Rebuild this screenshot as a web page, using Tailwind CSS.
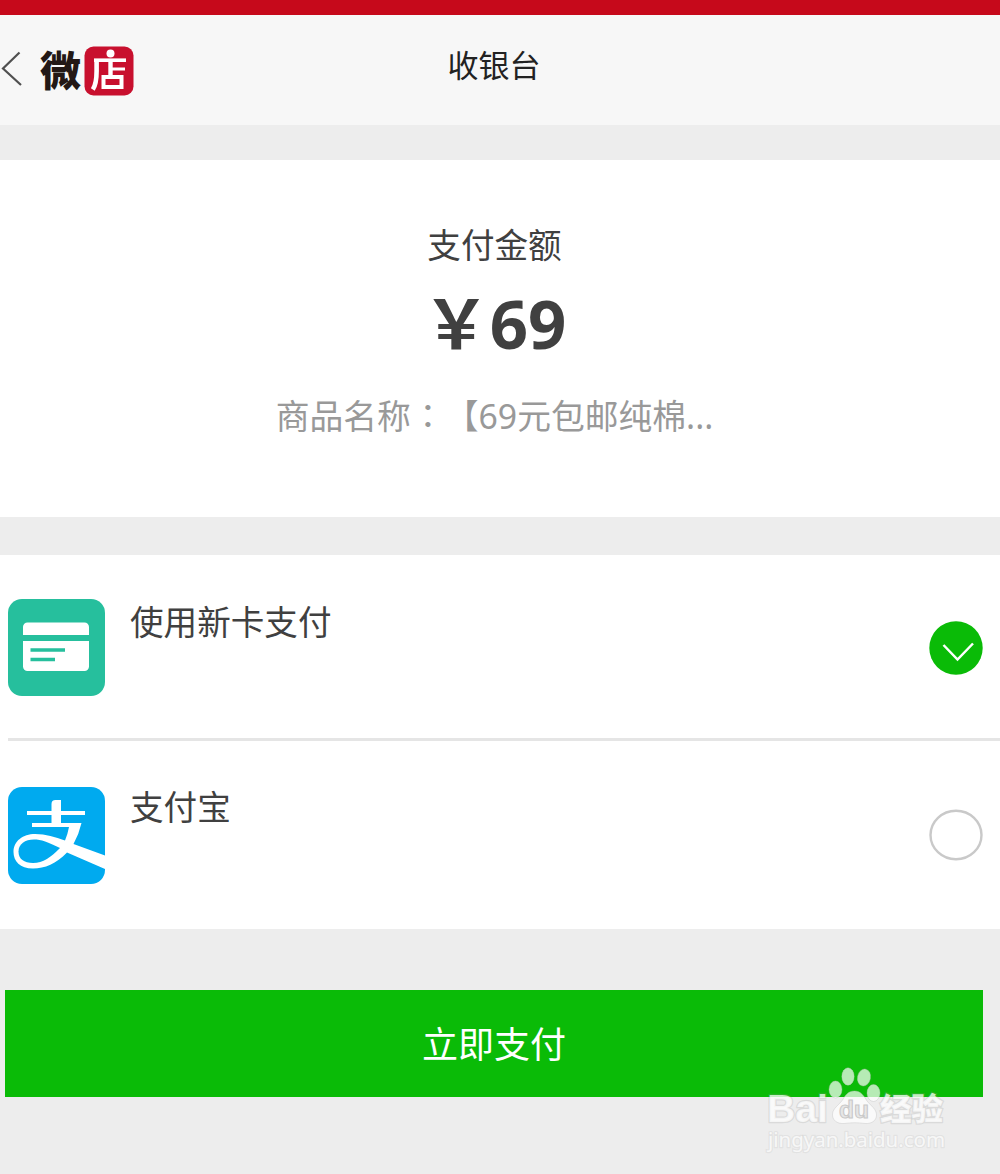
<!DOCTYPE html>
<html lang="zh-CN">
<head>
    <meta charset="UTF-8">
    <meta name="viewport" content="width=device-width, initial-scale=1.0">
    <title>收银台</title>
    <script src="https://cdn.jsdelivr.net/npm/@tailwindcss/browser@4"></script>
    <style>
        body {
            font-family: 'Noto Sans', 'Noto Sans CJK SC', sans-serif;
            text-spacing-trim: space-all; /* keep fullwidth punctuation a full em wide */
        }
    </style>
</head>
<body class="relative h-[1174px] w-[1000px] overflow-hidden bg-[#ededed] text-[#404040]">

<!-- Status bar -->
<div class="h-[15px] bg-[#c6091b]"></div>

<!-- Header -->
<header class="grid h-[110px] grid-cols-[1fr_auto_1fr] bg-[#f7f7f7] pr-3">
    <div class="flex items-start">
        <svg class="mt-[36px] h-[36px] w-[24px]" viewBox="0 0 24 36" fill="none" stroke="#505050" stroke-width="2.2">
            <path d="M19.5 1.5 3 17.5 21 34"/>
        </svg>
        <div class="mt-[31px] ml-[16px] flex items-start">
            <span class="w-[44px] text-[41px] leading-[48px] font-black text-[#231815]">微</span>
            <svg class="h-[50px] w-[50px]" viewBox="0 0 50 50">
                <rect x="0.5" y="0.5" width="49" height="49" rx="9" fill="#c8102e"/>
                <g fill="none" stroke="#fff" stroke-width="3.6">
                    <path d="M10 14.2H42"/>
                    <path stroke-width="4.6" d="M12.6 13V25Q12.6 38 8.8 43.5"/>
                    <path stroke-width="4.4" d="M26.5 16V31"/>
                    <path stroke-width="3" d="M27 23H41"/>
                    <path stroke-width="4" d="M19.5 31H37.5V41H18.5M19.5 29V43"/>
                </g>
                <circle cx="26.5" cy="7.5" r="4" fill="#fff"/>
            </svg>
        </div>
    </div>
    <h1 class="mt-[27px] text-[31px] leading-[46px] text-[#222]">收银台</h1>
</header>

<!-- Amount -->
<section class="mt-[35px] flex h-[357px] flex-col items-center bg-white pr-[11px]">
    <p class="mt-[61px] text-[33.6px] leading-[48px]">支付金额</p>
    <p class="mt-[15px] text-[67px] leading-[78px] font-bold">&#xFFE5;69</p>
    <p class="mt-[29px] text-[33.8px] leading-[48px] text-[#999]">商品名称<span lang="zh-TW" class="font-['Noto_Sans_CJK_TC']">&#xFF1A;</span>【69元包邮纯棉...</p>
</section>

<!-- Payment methods -->
<section class="mt-[38px] h-[374px] bg-white pl-2">
    <div class="flex h-[186px] items-start border-b-3 border-[#e5e5e5] pr-[17px]">
        <svg class="mt-[44px] h-[97px] w-[97px]" viewBox="0 0 97 97">
            <rect width="97" height="97" rx="14" fill="#26bf9d"/>
            <path d="M15 36V28a4.5 4.5 0 0 1 4.5-4.5h57A4.5 4.5 0 0 1 81 28v8ZM15 42h66v25.5a4.500 4.500 0 0 1-4.500 4.500h-57A4.500 4.500 0 0 1 15 67.500Z" fill="#fff"/>
            <path d="M22.5 51h34.5M22.5 60.5H47" stroke="#26bf9d" stroke-width="3.6"/>
        </svg>
        <p class="mt-[43px] ml-[25px] text-[33.6px] leading-[48px]">使用新卡支付</p>
        <svg class="mt-[66px] ml-auto h-[54px] w-[54px]" viewBox="0 0 54 54">
            <circle cx="27" cy="27" r="26.7" fill="#0abb07"/>
            <path d="M14.5 24 28.5 38.5 44 22.5" fill="none" stroke="#fff" stroke-width="2.5"/>
        </svg>
    </div>
    <div class="flex items-start pr-[17px]">
        <svg class="mt-[46px] h-[97px] w-[97px]" viewBox="0 0 97 97">
            <rect width="97" height="97" rx="14" fill="#00aaef"/>
            <path d="M19 24H43.5V17q0-4 4-4H53V24H77v4H53v8H73.5Q71 47 65.5 57L97 68.5V82L59 65.5C48 77 37 81.5 25 81.5 12 81.5 5.5 74 5.5 65 5.5 54 15 47 27 47 38 47 47 50 57 53.5Q59.5 48 61 40H24V36H43.5V28H19Z" fill="#fff"/>
            <path d="M52 61C40 55 33 52.5 26 52.5 17 52.5 10.5 57 10.5 64.5 10.5 72 16 76 25 76 35 76 43 70 52 61Z" fill="#00aaef"/>
        </svg>
        <p class="mt-[42px] ml-[25px] text-[33.6px] leading-[48px]">支付宝</p>
        <svg class="mt-[68px] ml-auto h-[52px] w-[54px]" viewBox="0 0 54 52">
            <ellipse cx="27" cy="26" rx="25.5" ry="24.3" fill="#fff" stroke="#c9c9c9" stroke-width="2.4"/>
        </svg>
    </div>
</section>

<button class="mt-[61px] ml-[5px] block h-[107px] w-[978px] bg-[#0abb07] text-[36px] leading-[109px] text-white">立即支付</button>

<!-- Watermark -->
<div class="absolute top-[1064px] left-[764px] h-[96px] w-[190px]">
    <svg class="h-full w-full" viewBox="0 0 190 96">
        <g fill="#fff" fill-opacity=".7" stroke="#bbb" stroke-opacity=".35" stroke-width="1">
            <ellipse cx="71.5" cy="25.5" rx="6.5" ry="8.5"/>
            <ellipse cx="84" cy="12.5" rx="6.2" ry="8.7"/>
            <ellipse cx="100" cy="13.5" rx="6.5" ry="8.5" transform="rotate(12 100 13.5)"/>
            <ellipse cx="109.5" cy="29" rx="6.5" ry="8.5"/>
            <path d="M90.5 27C97 27 100 32 103 37 107 42 112.5 45 112.5 51 112.5 57 107 60 101 59.5 94 58.5 88 58.5 80 59.5 73 60 68 56 68.5 50 69 44 75 41 78.5 36 81.5 31 84 27 90.5 27Z"/>
        </g>
        <g font-family="'Liberation Sans', sans-serif" fill="#fff" fill-opacity=".75" stroke="#999" stroke-opacity=".22" stroke-width="2.5" paint-order="stroke">
            <text x="3" y="58" font-size="39" font-weight="700" textLength="61" lengthAdjust="spacingAndGlyphs">Bai</text>
            <text x="116" y="56" font-family="'Noto Sans CJK SC', sans-serif" font-size="31" font-weight="900" textLength="63" lengthAdjust="spacingAndGlyphs">经验</text>
            <text x="4" y="82.5" font-family="'Noto Sans', sans-serif" font-size="19" stroke-opacity=".12" textLength="177" lengthAdjust="spacingAndGlyphs">jingyan.baidu.com</text>
        </g>
        <text x="75" y="54" font-family="'Liberation Sans', sans-serif" font-size="23" font-weight="700" fill="#e6e6e6" stroke="#c8c8c8" stroke-width="1" textLength="30" lengthAdjust="spacingAndGlyphs">du</text>
    </svg>
</div>

</body>
</html>
